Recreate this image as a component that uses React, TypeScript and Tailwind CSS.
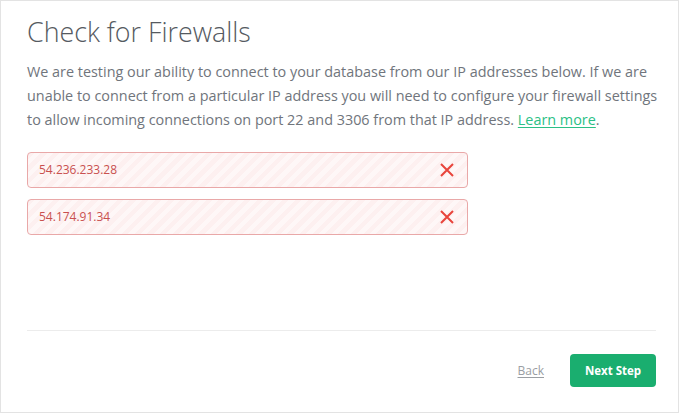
import React from "react";

function XIcon() {
  return (
    <svg width="14" height="14" viewBox="0 0 14 14" fill="none">
      <path d="M1 1L13 13M13 1L1 13" stroke="#e8453c" strokeWidth="2" strokeLinecap="butt" />
    </svg>
  );
}

function IpRow({ ip }: { ip: string }) {
  return (
    <div className="flex h-[36px] w-[441px] items-center justify-between rounded-[4px] border border-[#e9a8a8] bg-[repeating-linear-gradient(135deg,#fdf0f0_0px,#fdf0f0_4.5px,#fef7f7_4.5px,#fef7f7_9px)] pl-[11px] pr-[13px]">
      <span className="text-[12px] text-[#c9504f]">{ip}</span>
      <XIcon />
    </div>
  );
}

export default function App() {
  return (
    <div
      className="flex h-[413px] w-[679px] flex-col border border-[#e3e3e3] bg-white"
      style={{ fontFamily: '"Open Sans", "Noto Sans", sans-serif' }}
    >
      <div className="flex flex-1 flex-col pl-[26px] pr-[22px]">
        <h1 className="mt-[12px] text-[26.8px] font-light leading-[38px] text-[#555a61]">Check for Firewalls</h1>
        <p className="-mr-[10px] mt-[9px] text-[14.4px] leading-[24px] text-[#70757c]">
          We are testing our ability to connect to your database from our IP addresses below. If we are unable to connect from a particular IP address you will need to configure your firewall settings to allow incoming connections on port 22 and 3306 from that IP address.{" "}
          <a className="text-[#2bbf86] underline underline-offset-2" href="#">Learn more</a>.
        </p>
        <div className="mt-[20px] flex flex-col gap-[11px]">
          <IpRow ip="54.236.233.28" />
          <IpRow ip="54.174.91.34" />
        </div>
        <div className="mt-auto mb-[25px] flex flex-col">
          <div className="h-px w-full bg-[#ececec]" />
          <div className="mt-[23px] flex items-center justify-end gap-[26px]">
            <a className="text-[12px] text-[#9a9ea3] underline underline-offset-2" href="#">Back</a>
            <button className="h-[33px] w-[86px] rounded-[4px] bg-[#1aae6f] text-[11.5px] font-bold text-white">Next Step</button>
          </div>
        </div>
      </div>
    </div>
  );
}
